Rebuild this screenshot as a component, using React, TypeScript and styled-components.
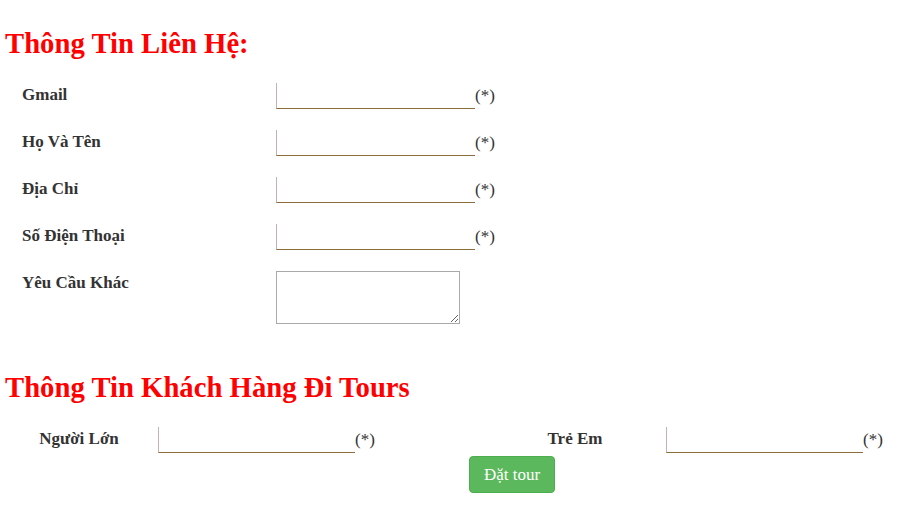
import React from "react";
import styled, { createGlobalStyle } from "styled-components";

const Global = createGlobalStyle`
  html, body { margin: 0; padding: 0; background: #fff; }
  body { font-family: "Liberation Serif", "Times New Roman", serif; color: #333; font-size: 17px; }
  * { box-sizing: border-box; }
`;

const Page = styled.div`
  width: 902px;
  height: 505px;
  overflow: hidden;
  padding-top: 28px;
`;

const Heading = styled.h2<{ $top?: number }>`
  margin: ${(p) => p.$top ?? 0}px 0 0 5px;
  font-size: 28.7px;
  line-height: 31px;
  font-weight: bold;
  color: #ff0000;
`;

const ContactForm = styled.div`
  display: flex;
  flex-direction: column;
  gap: 21px;
  padding-left: 22px;
  margin-top: 24px;
`;

const Row = styled.div`
  display: grid;
  grid-template-columns: 254px 1fr;
  align-items: start;
`;

const Label = styled.label`
  font-weight: bold;
  font-size: 17px;
  line-height: 24px;
  color: #333;
`;

const Field = styled.div`
  display: flex;
  align-items: center;
`;

const Input = styled.input<{ $w: number }>`
  width: ${(p) => p.$w}px;
  height: 26px;
  border: none;
  border-left: 1px solid #c4b2ae;
  border-bottom: 1px solid #8a6d3b;
  background: transparent;
  outline: none;
  padding: 0 4px;
  font-family: inherit;
  font-size: 17px;
`;

const Required = styled.span`
  font-size: 17px;
  line-height: 24px;
  color: #333;
`;

const TextArea = styled.textarea`
  width: 184px;
  height: 53px;
  border: 1px solid #a9a9a9;
  padding: 2px;
  font-family: inherit;
  resize: both;
`;

const GuestRow = styled.div`
  display: grid;
  grid-template-columns: 158px 326px 182px 1fr;
  align-items: start;
  margin-top: 24px;
`;

const CenterLabel = styled(Label)`
  text-align: center;
`;

const ButtonRow = styled.div`
  padding-left: 469px;
  margin-top: 3px;
`;

const Button = styled.button`
  height: 37px;
  padding: 0 14px;
  background: #5cb85c;
  border: 1px solid #4cae4c;
  border-radius: 4px;
  color: #fff;
  font-family: "Liberation Serif", "Times New Roman", serif;
  font-size: 17px;
  cursor: pointer;
`;

const contactFields = [
  { label: "Gmail" },
  { label: "Họ Và Tên" },
  { label: "Địa Chỉ" },
  { label: "Số Điện Thoại" },
];

export default function App() {
  return (
    <Page>
      <Global />
      <Heading>Thông Tin Liên Hệ:</Heading>
      <ContactForm>
        {contactFields.map((f) => (
          <Row key={f.label}>
            <Label>{f.label}</Label>
            <Field>
              <Input $w={199} />
              <Required>(*)</Required>
            </Field>
          </Row>
        ))}
        <Row>
          <Label>Yêu Cầu Khác</Label>
          <Field>
            <TextArea />
          </Field>
        </Row>
      </ContactForm>
      <Heading $top={48}>Thông Tin Khách Hàng Đi Tours</Heading>
      <GuestRow>
        <CenterLabel>Người Lớn</CenterLabel>
        <Field>
          <Input $w={197} />
          <Required>(*)</Required>
        </Field>
        <CenterLabel>Trẻ Em</CenterLabel>
        <Field>
          <Input $w={197} />
          <Required>(*)</Required>
        </Field>
      </GuestRow>
      <ButtonRow>
        <Button>Đặt tour</Button>
      </ButtonRow>
    </Page>
  );
}
